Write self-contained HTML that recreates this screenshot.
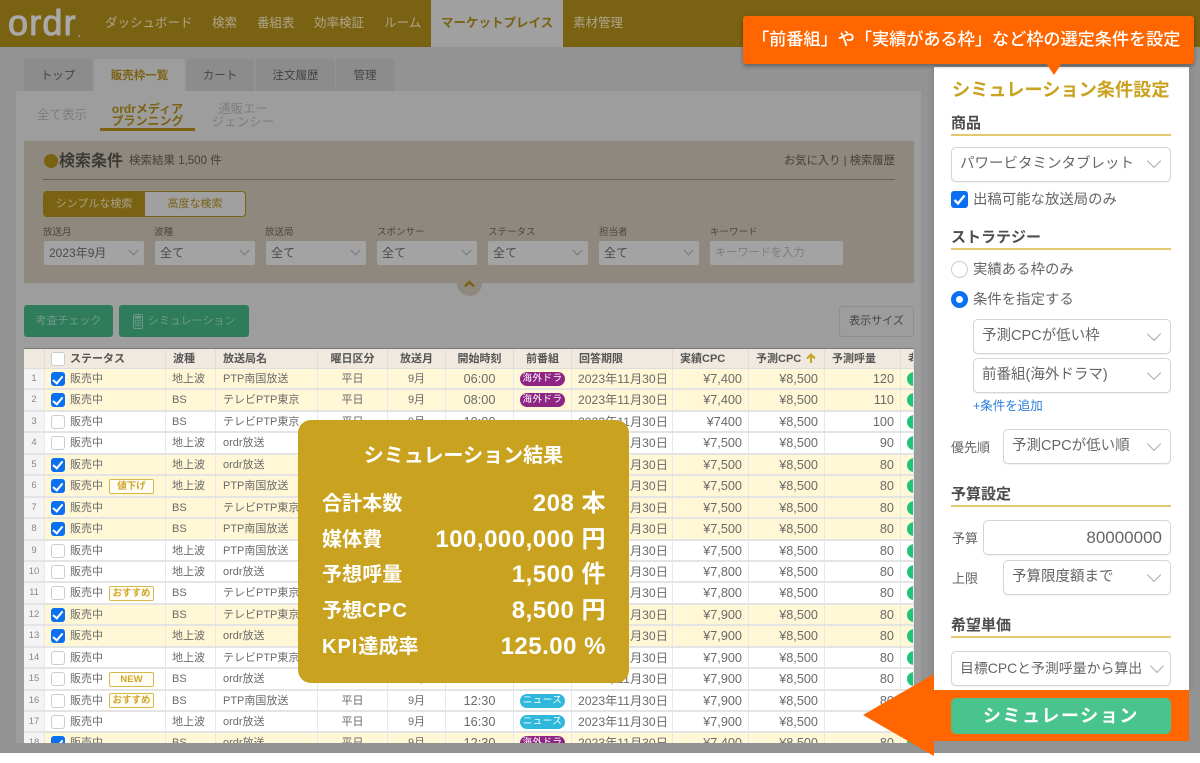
<!DOCTYPE html>
<html lang="ja"><head><meta charset="utf-8"><title>ordr</title>
<style>
*{box-sizing:border-box;margin:0;padding:0}
html,body{width:1200px;height:763px;overflow:hidden;background:#fff}
body{position:relative;font-family:"Liberation Sans","Noto Sans CJK JP",sans-serif;color:#555}
.a{position:absolute;white-space:nowrap}
#bg{left:0;top:0;width:1200px;height:753px;background:#939393}
#hd{left:0;top:0;width:1200px;height:47px;background:#7a6213}
.n{top:14px;font-size:12.5px;line-height:18px;color:#ada58a}
.tab{top:59px;height:32px;background:#8c8c8c;border-radius:3px 3px 0 0;font-size:11.5px;line-height:35px;text-align:center;color:#444}
.lab{top:227px;font-size:9.5px;line-height:12px;color:#4a4742}
.sel{top:241px;height:24px;background:#a3a3a3;border-radius:2px;font-size:12px;line-height:25px;padding-left:5px;color:#4a4a4a}
.chev{position:absolute;width:7px;height:7px;border-right:1px solid #888;border-bottom:1px solid #888;transform:rotate(45deg)}
.sel .chev{right:7px;top:6px;border-color:#777}
/* table */
#tb{left:24px;top:348px;width:890px;height:395px;overflow:hidden;background:#e6e6e6;border-top:1px solid #777}
.r{display:grid;grid-template-columns:21px 121px 50px 102px 70px 58px 68px 58px 101px 76px 76px 76px 13px;height:21.44px;font-size:11px;line-height:20px;color:#6a6a6a;background:#fff;border-bottom:2px solid #e4e4e4}
.r>*{display:block;border-right:1px solid #e8e8e8;font-style:normal;font-weight:400;overflow:hidden;white-space:nowrap;position:relative}
.r.y{background:#fff7d6}
.h{background:#efe9df;color:#555;height:20px;border-bottom:1px solid #ddd}
.h>*{font-weight:700;padding-left:7px;border-right:1px solid #e2dcd2;font-size:11px}
.r i{background:#f4f4f4;text-align:center;font-size:9.5px;color:#888}
.h i{background:#efe9df}
.s{padding-left:25px}
.s::before{content:"";position:absolute;left:6px;top:3px;width:12px;height:12px;border:1px solid #ccc;border-radius:3px;background:#fff}
.k::before{background:#0a6ff0;border-color:#0a6ff0}
.k::after{content:"";position:absolute;left:10px;top:4.5px;width:4px;height:7.5px;border:solid #fff;border-width:0 2px 2px 0;transform:rotate(40deg)}
.s u{position:absolute;left:64px;top:2.5px;width:45px;height:15px;border:1px solid #d9b84a;border-radius:2px;text-decoration:none;font-size:9.5px;font-weight:700;line-height:13px;text-align:center;color:#cfa728;background:#fffdf5}
.l{padding-left:6px}.l+.l{padding-left:7px}.c{text-align:center}.m{padding-left:6px;font-size:12.2px}.t{text-align:right;padding-right:6px;font-size:12.7px}
.r:not(.h)>:nth-child(7){font-size:12.7px}
.p{padding-left:6px}
.p s{display:block;text-decoration:none;width:45px;height:14px;margin-top:3px;border-radius:7px;color:#fff;font-size:9.5px;line-height:14px;text-align:center;letter-spacing:.5px}
.pu s{background:#8e2585}.cy s{background:#2fb8dc}
.d::before{content:"";position:absolute;left:6px;top:3px;width:14px;height:14px;border-radius:50%;background:#1fc47a}
/* result */
#res{left:298px;top:420px;width:331px;height:263px;background:#c9a320;border-radius:13px;color:#fff}
#res div{position:absolute;white-space:nowrap;font-weight:700}
.rl{left:24px;font-size:20px;line-height:28px;letter-spacing:.1px}
.rr{right:23px;font-size:24px;line-height:28px;font-weight:700;letter-spacing:.5px}
/* panel */
#pn{left:934px;top:67px;width:255px;height:624px;background:#fff;box-shadow:0 0 6px rgba(0,0,0,.15)}
.sh{left:951px;width:220px;font-size:15px;font-weight:700;line-height:23px;color:#4d4d4d;border-bottom:2px solid #e2c86f;height:24px}
.fs{height:35px;border:1px solid #d4d4d4;border-radius:5px;background:#fff;font-size:14.5px;line-height:33px;color:#666;padding-left:8px;box-shadow:0 1px 1px rgba(0,0,0,.06)}
.fs .chev{right:11px;top:9px;width:10px;height:10px;border-color:#aaa}
.pl{font-size:13px;line-height:20px;color:#666}
.ptxt{font-size:14.4px;line-height:22px;color:#666}
</style></head><body>
<div class="a" id="bg"></div>
<div class="a" id="hd"></div>
<div class="a" style="left:8px;top:1px;font-size:36px;line-height:44px;color:#a9a9a9;letter-spacing:1.2px;-webkit-text-stroke:1px #a9a9a9">ordr</div>
<div class="a" style="left:78px;top:35px;width:2px;height:2px;background:#999;border-radius:50%"></div>
<div class="a n" style="left:105px">ダッシュボード</div>
<div class="a n" style="left:212px">検索</div>
<div class="a n" style="left:257px">番組表</div>
<div class="a n" style="left:314px">効率検証</div>
<div class="a n" style="left:384px">ルーム</div>
<div class="a" style="left:431px;top:0;width:132px;height:47px;background:#a0a0a0"></div>
<div class="a n" style="left:441px;font-weight:700;color:#7a6213">マーケットプレイス</div>
<div class="a n" style="left:573px">素材管理</div>

<div class="a" style="left:16px;top:91px;width:905px;height:652px;background:#9d9d9d"></div>
<div class="a tab" style="left:24px;width:68px">トップ</div>
<div class="a tab" style="left:94px;width:91px;background:#9d9d9d;color:#7a6213;font-weight:700">販売枠一覧</div>
<div class="a tab" style="left:186px;width:68px">カート</div>
<div class="a tab" style="left:256px;width:79px">注文履歴</div>
<div class="a tab" style="left:336px;width:58px">管理</div>

<div class="a" style="left:37px;top:106px;font-size:12.5px;line-height:18px;color:#7e7e7e">全て表示</div>
<div class="a" style="left:100px;top:104px;width:95px;text-align:center;font-size:12px;line-height:11.5px;font-weight:700;color:#7a6213">ordrメディア<br>プランニング</div>
<div class="a" style="left:100px;top:128px;width:95px;height:3px;background:#7a6213"></div>
<div class="a" style="left:205px;top:103px;width:76px;text-align:center;font-size:12.5px;line-height:13px;color:#7e7e7e">通販エー<br>ジェンシー</div>

<div class="a" style="left:24px;top:141px;width:890px;height:142px;background:#8f887f"></div>
<div class="a" style="left:44px;top:154px;width:14px;height:14px;border-radius:50%;background:#7a6213"></div>
<div class="a" style="left:59px;top:151px;font-size:16px;line-height:22px;font-weight:700;color:#3c3a36">検索条件</div>
<div class="a" style="left:129px;top:153px;font-size:11.5px;line-height:17px;color:#423f3b">検索結果 1,500 件</div>
<div class="a" style="left:784px;top:153px;font-size:11.3px;line-height:17px;color:#423f3b">お気に入り | 検索履歴</div>
<div class="a" style="left:43px;top:179px;width:852px;height:1px;background:#66625c"></div>
<div class="a" style="left:43px;top:191px;width:203px;height:26px;background:#a0a0a0;border:1px solid #7a6213;border-radius:4px"></div>
<div class="a" style="left:43px;top:191px;width:102px;height:26px;background:#7a6213;border-radius:4px 0 0 4px;font-size:11px;line-height:27px;text-align:center;color:#aaa188">シンプルな検索</div>
<div class="a" style="left:145px;top:191px;width:100px;height:26px;font-size:11px;line-height:27px;text-align:center;color:#7a6213">高度な検索</div>

<div class="a lab" style="left:43px">放送月</div><div class="a lab" style="left:154px">波種</div><div class="a lab" style="left:265px">放送局</div><div class="a lab" style="left:377px">スポンサー</div><div class="a lab" style="left:488px">ステータス</div><div class="a lab" style="left:599px">担当者</div><div class="a lab" style="left:710px">キーワード</div>
<div class="a sel" style="left:44px;width:100px">2023年9月<span class="chev"></span></div>
<div class="a sel" style="left:155px;width:100px">全て<span class="chev"></span></div>
<div class="a sel" style="left:266px;width:100px">全て<span class="chev"></span></div>
<div class="a sel" style="left:377px;width:100px">全て<span class="chev"></span></div>
<div class="a sel" style="left:488px;width:100px">全て<span class="chev"></span></div>
<div class="a sel" style="left:599px;width:100px">全て<span class="chev"></span></div>
<div class="a sel" style="left:710px;width:133px;color:#7e7e7e;font-size:11.2px">キーワードを入力</div>
<div class="a" style="left:457px;top:271px;width:25px;height:25px;border-radius:50%;background:#8f887f"></div>
<svg class="a" style="left:463px;top:279px" width="13" height="10" viewBox="0 0 13 10"><path d="M2 7.5 6.5 3 11 7.5" fill="none" stroke="#7a6213" stroke-width="2.4"/></svg>

<div class="a" style="left:24px;top:305px;width:89px;height:32px;background:#2f7c5c;border-radius:3px;font-size:11px;line-height:33px;text-align:center;color:#6f9a88">考査チェック</div>
<div class="a" style="left:119px;top:305px;width:130px;height:32px;background:#2f7c5c;border-radius:3px;font-size:11px;line-height:33px;padding-left:29px;color:#6f9a88">シミュレーション</div>
<svg class="a" style="left:133px;top:314px" width="10" height="15" viewBox="0 0 10 15"><rect x=".5" y=".5" width="9" height="14" rx="1.5" fill="none" stroke="#6f9a88"/><rect x="2" y="2" width="6" height="2.5" fill="#6f9a88"/><path d="M2 6.5h1.6M4.4 6.5H6M6.6 6.5H8M2 9h1.6M4.4 9H6M6.6 9H8M2 11.5h1.6M4.4 11.5H6M6.6 11.5H8" stroke="#6f9a88" stroke-width="1.5"/></svg>
<div class="a" style="left:839px;top:306px;width:75px;height:31px;border:1px solid #8e8e8e;border-radius:3px;font-size:11px;line-height:29px;text-align:center;color:#444">表示サイズ</div>

<div class="a" id="tb">
<div class="r h"><i></i><b class="s" style="padding-left:25px">ステータス</b><b>波種</b><b>放送局名</b><b style="text-align:center;padding:0">曜日区分</b><b style="text-align:center;padding:0">放送月</b><b style="text-align:center;padding:0">開始時刻</b><b style="text-align:center;padding:0">前番組</b><b>回答期限</b><b>実績CPC</b><b>予測CPC <svg width="10" height="10" viewBox="0 0 10 10" style="vertical-align:-1px;margin-left:2px"><path d="M5 10V2M1 5.5 5 1.5l4 4" fill="none" stroke="#c9a320" stroke-width="2"/></svg></b><b>予測呼量</b><b>考</b></div>
<div class="r y"><i>1</i><em class="s k">販売中</em><em class="l">地上波</em><em class="l">PTP南国放送</em><em class="c">平日</em><em class="c">9月</em><em class="c">06:00</em><em class="p pu"><s>海外ドラ</s></em><em class="m">2023年11月30日</em><em class="t">¥7,400</em><em class="t">¥8,500</em><em class="t">120</em><em class="d"></em></div>
<div class="r y"><i>2</i><em class="s k">販売中</em><em class="l">BS</em><em class="l">テレビPTP東京</em><em class="c">平日</em><em class="c">9月</em><em class="c">08:00</em><em class="p pu"><s>海外ドラ</s></em><em class="m">2023年11月30日</em><em class="t">¥7,400</em><em class="t">¥8,500</em><em class="t">110</em><em class="d"></em></div>
<div class="r"><i>3</i><em class="s">販売中</em><em class="l">BS</em><em class="l">テレビPTP東京</em><em class="c">平日</em><em class="c">9月</em><em class="c">10:00</em><em class="p"></em><em class="m">2023年11月30日</em><em class="t">¥7400</em><em class="t">¥8,500</em><em class="t">100</em><em class="d"></em></div>
<div class="r"><i>4</i><em class="s">販売中</em><em class="l">地上波</em><em class="l">ordr放送</em><em class="c">平日</em><em class="c">9月</em><em class="c">10:00</em><em class="p"></em><em class="m">2023年11月30日</em><em class="t">¥7,500</em><em class="t">¥8,500</em><em class="t">90</em><em class="d"></em></div>
<div class="r y"><i>5</i><em class="s k">販売中</em><em class="l">地上波</em><em class="l">ordr放送</em><em class="c">平日</em><em class="c">9月</em><em class="c">10:00</em><em class="p"></em><em class="m">2023年11月30日</em><em class="t">¥7,500</em><em class="t">¥8,500</em><em class="t">80</em><em class="d"></em></div>
<div class="r y"><i>6</i><em class="s k">販売中<u>値下げ</u></em><em class="l">地上波</em><em class="l">PTP南国放送</em><em class="c">平日</em><em class="c">9月</em><em class="c">10:00</em><em class="p"></em><em class="m">2023年11月30日</em><em class="t">¥7,500</em><em class="t">¥8,500</em><em class="t">80</em><em class="d"></em></div>
<div class="r y"><i>7</i><em class="s k">販売中</em><em class="l">BS</em><em class="l">テレビPTP東京</em><em class="c">平日</em><em class="c">9月</em><em class="c">10:00</em><em class="p"></em><em class="m">2023年11月30日</em><em class="t">¥7,500</em><em class="t">¥8,500</em><em class="t">80</em><em class="d"></em></div>
<div class="r y"><i>8</i><em class="s k">販売中</em><em class="l">BS</em><em class="l">PTP南国放送</em><em class="c">平日</em><em class="c">9月</em><em class="c">10:00</em><em class="p"></em><em class="m">2023年11月30日</em><em class="t">¥7,500</em><em class="t">¥8,500</em><em class="t">80</em><em class="d"></em></div>
<div class="r"><i>9</i><em class="s">販売中</em><em class="l">地上波</em><em class="l">PTP南国放送</em><em class="c">平日</em><em class="c">9月</em><em class="c">10:00</em><em class="p"></em><em class="m">2023年11月30日</em><em class="t">¥7,500</em><em class="t">¥8,500</em><em class="t">80</em><em class="d"></em></div>
<div class="r"><i>10</i><em class="s">販売中</em><em class="l">地上波</em><em class="l">ordr放送</em><em class="c">平日</em><em class="c">9月</em><em class="c">10:00</em><em class="p"></em><em class="m">2023年11月30日</em><em class="t">¥7,800</em><em class="t">¥8,500</em><em class="t">80</em><em class="d"></em></div>
<div class="r"><i>11</i><em class="s">販売中<u>おすすめ</u></em><em class="l">BS</em><em class="l">テレビPTP東京</em><em class="c">平日</em><em class="c">9月</em><em class="c">10:00</em><em class="p"></em><em class="m">2023年11月30日</em><em class="t">¥7,800</em><em class="t">¥8,500</em><em class="t">80</em><em class="d"></em></div>
<div class="r y"><i>12</i><em class="s k">販売中</em><em class="l">BS</em><em class="l">テレビPTP東京</em><em class="c">平日</em><em class="c">9月</em><em class="c">10:00</em><em class="p"></em><em class="m">2023年11月30日</em><em class="t">¥7,900</em><em class="t">¥8,500</em><em class="t">80</em><em class="d"></em></div>
<div class="r y"><i>13</i><em class="s k">販売中</em><em class="l">地上波</em><em class="l">ordr放送</em><em class="c">平日</em><em class="c">9月</em><em class="c">10:00</em><em class="p"></em><em class="m">2023年11月30日</em><em class="t">¥7,900</em><em class="t">¥8,500</em><em class="t">80</em><em class="d"></em></div>
<div class="r"><i>14</i><em class="s">販売中</em><em class="l">地上波</em><em class="l">テレビPTP東京</em><em class="c">平日</em><em class="c">9月</em><em class="c">10:00</em><em class="p"></em><em class="m">2023年11月30日</em><em class="t">¥7,900</em><em class="t">¥8,500</em><em class="t">80</em><em class="d"></em></div>
<div class="r"><i>15</i><em class="s">販売中<u>NEW</u></em><em class="l">BS</em><em class="l">ordr放送</em><em class="c">平日</em><em class="c">9月</em><em class="c">10:00</em><em class="p"></em><em class="m">2023年11月30日</em><em class="t">¥7,900</em><em class="t">¥8,500</em><em class="t">80</em><em class="d"></em></div>
<div class="r"><i>16</i><em class="s">販売中<u>おすすめ</u></em><em class="l">BS</em><em class="l">PTP南国放送</em><em class="c">平日</em><em class="c">9月</em><em class="c">12:30</em><em class="p cy"><s>ニュース</s></em><em class="m">2023年11月30日</em><em class="t">¥7,900</em><em class="t">¥8,500</em><em class="t">80</em><em class="d"></em></div>
<div class="r"><i>17</i><em class="s">販売中</em><em class="l">地上波</em><em class="l">ordr放送</em><em class="c">平日</em><em class="c">9月</em><em class="c">16:30</em><em class="p cy"><s>ニュース</s></em><em class="m">2023年11月30日</em><em class="t">¥7,900</em><em class="t">¥8,500</em><em class="t">80</em><em class="d"></em></div>
<div class="r y"><i>18</i><em class="s k">販売中</em><em class="l">BS</em><em class="l">ordr放送</em><em class="c">平日</em><em class="c">9月</em><em class="c">12:30</em><em class="p pu"><s>海外ドラ</s></em><em class="m">2023年11月30日</em><em class="t">¥7,400</em><em class="t">¥8,500</em><em class="t">80</em><em class="d"></em></div>
</div>

<div class="a" id="res">
<div style="left:0;width:331px;top:22px;text-align:center;font-size:20px;line-height:28px">シミュレーション結果</div>
<div class="rl" style="top:70px">合計本数</div><div class="rr" style="top:70px">208 本</div>
<div class="rl" style="top:106px">媒体費</div><div class="rr" style="top:106px">100,000,000 円</div>
<div class="rl" style="top:141px">予想呼量</div><div class="rr" style="top:141px">1,500 件</div>
<div class="rl" style="top:177px">予想<span style="letter-spacing:1.2px">CPC</span></div><div class="rr" style="top:177px">8,500 円</div>
<div class="rl" style="top:213px"><span style="letter-spacing:1px">KPI</span>達成率</div><div class="rr" style="top:213px">125.00 %</div>
</div>

<div class="a" id="pn"></div>
<div class="a" style="left:952px;top:77px;font-size:18.2px;line-height:26px;font-weight:700;color:#c9a320">シミュレーション条件設定</div>

<div class="a sh" style="top:112px">商品</div>
<div class="a fs" style="left:951px;top:147px;width:220px">パワービタミンタブレット<span class="chev" style="top:8px"></span></div>
<svg class="a" style="left:951px;top:191px" width="17" height="17" viewBox="0 0 17 17"><rect width="17" height="17" rx="3" fill="#0a6ff0"/><path d="M3.5 9 7 12.5 13.5 4.5" fill="none" stroke="#fff" stroke-width="2.4"/></svg>
<div class="a ptxt" style="left:973px;top:189px">出稿可能な放送局のみ</div>

<div class="a sh" style="top:226px">ストラテジー</div>
<div class="a" style="left:951px;top:261px;width:17px;height:17px;border:1px solid #ccc;border-radius:50%;background:#fff"></div>
<div class="a ptxt" style="left:973px;top:259px">実績ある枠のみ</div>
<div class="a" style="left:951px;top:291px;width:17px;height:17px;border:5px solid #0a6ff0;border-radius:50%;background:#fff"></div>
<div class="a ptxt" style="left:973px;top:289px">条件を指定する</div>
<div class="a fs" style="left:973px;top:319px;width:198px">予測CPCが低い枠<span class="chev"></span></div>
<div class="a fs" style="left:973px;top:358px;width:198px">前番組(海外ドラマ)<span class="chev"></span></div>
<div class="a" style="left:973px;top:397px;font-size:12.5px;line-height:19px;color:#2a7fe0">+条件を追加</div>
<div class="a pl" style="left:951px;top:438px">優先順</div>
<div class="a fs" style="left:1003px;top:429px;width:168px">予測CPCが低い順<span class="chev"></span></div>

<div class="a sh" style="top:483px">予算設定</div>
<div class="a pl" style="left:952px;top:529px">予算</div>
<div class="a fs" style="left:983px;top:520px;width:188px;text-align:right;padding-right:8px;font-size:17px;line-height:33px">80000000</div>
<div class="a pl" style="left:952px;top:569px">上限</div>
<div class="a fs" style="left:1003px;top:560px;width:168px">予算限度額まで<span class="chev"></span></div>

<div class="a sh" style="top:614px">希望単価</div>
<div class="a fs" style="left:951px;top:651px;width:220px;font-size:13.9px">目標CPCと予測呼量から算出<span class="chev" style="right:8px"></span></div>

<div class="a" style="left:934px;top:690px;width:255px;height:51px;background:#ff6600"></div>
<svg class="a" style="left:863px;top:674px" width="72" height="82" viewBox="0 0 72 82"><path d="M71 0V82L0 41Z" fill="#ff6600"/></svg>
<div class="a" style="left:951px;top:698px;width:220px;height:36px;background:#4ac48e;border-radius:5px;color:#fff;font-size:18px;font-weight:700;line-height:36px;text-align:center;letter-spacing:1.6px">シミュレーション</div>

<div class="a" style="left:743px;top:16px;width:451px;height:48px;background:#ff6600;border-radius:3px;box-shadow:0 2px 4px rgba(0,0,0,.35);color:#fff;font-size:17.2px;font-weight:500;line-height:47px;padding-left:9px;letter-spacing:-.05px">「前番組」や「実績がある枠」など枠の選定条件を設定</div>
<svg class="a" style="left:1046px;top:63px" width="16" height="13" viewBox="0 0 16 13"><path d="M0 0H16L8 12Z" fill="#ff6600"/></svg>
</body></html>
